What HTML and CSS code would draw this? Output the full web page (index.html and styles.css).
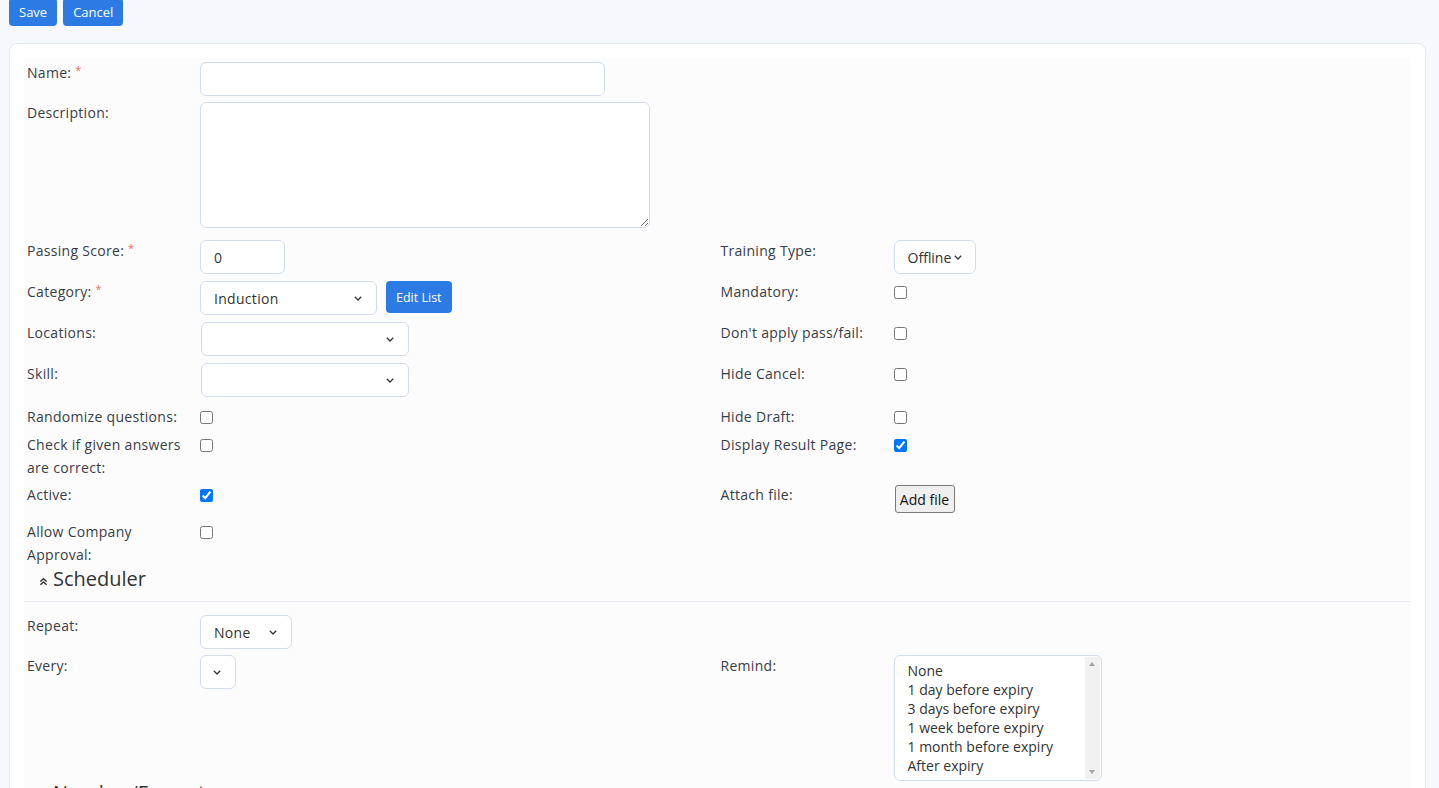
FILE: index.html
```html
<!DOCTYPE html>
<html lang="en">
<head>
    <meta charset="UTF-8">
    <meta name="viewport" content="width=device-width, initial-scale=1.0">
    <title>Edit Training</title>
    <link rel="stylesheet" href="styles.css">
</head>
<body>

    <div class="toolbar">
        <button type="button" class="btn btn-primary">Save</button>
        <button type="button" class="btn btn-primary">Cancel</button>
    </div>

    <div class="card">
        <form class="card-body">
            <!-- General -->
            <div class="row row-name">
                <div class="half">
                    <label class="lbl">Name: <span class="req">*</span></label>
                    <div><input type="text" class="form-control w-name"></div>
                </div>
            </div>

            <div class="row row-desc">
                <div class="half">
                    <label class="lbl">Description:</label>
                    <div><textarea class="form-control w-desc"></textarea></div>
                </div>
            </div>

            <div class="row">
                <div class="half">
                    <label class="lbl">Passing Score: <span class="req">*</span></label>
                    <div><input type="text" class="form-control w-score" value="0"></div>
                </div>
                <div class="half">
                    <label class="lbl">Training Type:</label>
                    <div>
                        <select class="form-select w-type">
                            <option>Offline</option>
                            <option>Online</option>
                        </select>
                    </div>
                </div>
            </div>

            <div class="row">
                <div class="half">
                    <label class="lbl">Category: <span class="req">*</span></label>
                    <div class="inline">
                        <select class="form-select w-category">
                            <option>Induction</option>
                        </select>
                        <button type="button" class="btn btn-primary btn-sm">Edit List</button>
                    </div>
                </div>
                <div class="half">
                    <label class="lbl">Mandatory:</label>
                    <div><input type="checkbox" class="check"></div>
                </div>
            </div>

            <div class="row">
                <div class="half">
                    <label class="lbl">Locations:</label>
                    <div><select class="form-select w-wide"><option></option></select></div>
                </div>
                <div class="half">
                    <label class="lbl">Don't apply pass/fail:</label>
                    <div><input type="checkbox" class="check"></div>
                </div>
            </div>

            <div class="row row-skill">
                <div class="half">
                    <label class="lbl">Skill:</label>
                    <div><select class="form-select w-wide"><option></option></select></div>
                </div>
                <div class="half">
                    <label class="lbl">Hide Cancel:</label>
                    <div><input type="checkbox" class="check"></div>
                </div>
            </div>

            <div class="row row-check row-random">
                <div class="half">
                    <label class="lbl">Randomize questions:</label>
                    <div><input type="checkbox" class="check"></div>
                </div>
                <div class="half">
                    <label class="lbl">Hide Draft:</label>
                    <div><input type="checkbox" class="check"></div>
                </div>
            </div>

            <div class="row row-check">
                <div class="half">
                    <label class="lbl">Check if given answers are correct:</label>
                    <div><input type="checkbox" class="check"></div>
                </div>
                <div class="half">
                    <label class="lbl">Display Result Page:</label>
                    <div><input type="checkbox" class="check" checked></div>
                </div>
            </div>

            <div class="row row-check row-attach">
                <div class="half">
                    <label class="lbl">Active:</label>
                    <div><input type="checkbox" class="check" checked></div>
                </div>
                <div class="half">
                    <label class="lbl">Attach file:</label>
                    <div><button type="button" class="file-btn">Add file</button></div>
                </div>
            </div>

            <div class="row row-check row-approval">
                <div class="half">
                    <label class="lbl">Allow Company Approval:</label>
                    <div><input type="checkbox" class="check"></div>
                </div>
            </div>

            <!-- Scheduler -->
            <h4 class="group-title">
                <svg width="9" height="9" viewBox="0 0 10 10" fill="none" stroke="#333" stroke-width="1.6">
                    <path d="M1.5 5 L5 1.8 L8.5 5"/>
                    <path d="M1.5 8.6 L5 5.4 L8.5 8.6"/>
                </svg>
                Scheduler
            </h4>
            <hr class="divider">

            <div class="row row-repeat">
                <div class="half">
                    <label class="lbl">Repeat:</label>
                    <div>
                        <select class="form-select w-repeat">
                            <option>None</option>
                            <option>Daily</option>
                            <option>Weekly</option>
                            <option>Monthly</option>
                            <option>Yearly</option>
                        </select>
                    </div>
                </div>
            </div>

            <div class="row row-remind">
                <div class="half">
                    <label class="lbl">Every:</label>
                    <div><select class="form-select w-every"><option></option></select></div>
                </div>
                <div class="half">
                    <label class="lbl">Remind:</label>
                    <div>
                        <div class="listbox" role="listbox" aria-multiselectable="true">
                            <div class="listbox-items">
                                <div role="option">None</div>
                                <div role="option">1 day before expiry</div>
                                <div role="option">3 days before expiry</div>
                                <div role="option">1 week before expiry</div>
                                <div role="option">1 month before expiry</div>
                                <div role="option">After expiry</div>
                            </div>
                            <div class="scroll-track">
                                <span class="arrow-up"></span>
                                <span class="arrow-down"></span>
                            </div>
                        </div>
                    </div>
                </div>
            </div>

            <!-- Numbering -->
            <h4 class="group-title">
                <svg width="9" height="9" viewBox="0 0 10 10" fill="none" stroke="#333" stroke-width="1.6">
                    <path d="M1.5 5 L5 1.8 L8.5 5"/>
                    <path d="M1.5 8.6 L5 5.4 L8.5 8.6"/>
                </svg>
                Number/Format
            </h4>
        </form>
    </div>

</body>
</html>
```

FILE: styles.css
```css
:root {
    --primary-color: #2c7be5;
    --page-bg: #f6f8fc;
    --card-border: #e3e8f1;
    --panel-bg: #fcfcfd;
    --input-border: #d2dcea;
    --text-color: #383d47;
    --danger-color: #ef6b6b;
}

body {
    margin: 0;
    padding: 0 13px 0 9px;
    background-color: var(--page-bg);
    font-family: "Open Sans", Arial, sans-serif;
    font-size: 14px;
    letter-spacing: 0.3px;
    color: var(--text-color);
    overflow: hidden;
}

/* Top action buttons */
.toolbar {
    display: flex;
    gap: 6px;
    margin-top: -2px;
}

.btn {
    font-family: inherit;
    letter-spacing: 0;
    border: none;
    border-radius: 4px;
    cursor: pointer;
}

.btn-primary {
    background-color: var(--primary-color);
    color: #fff;
    font-size: 13px;
    height: 28px;
    padding: 0 10px;
}

.btn-sm {
    height: 32px;
    font-size: 12.5px;
    padding: 0 10px;
    margin-left: 9px;
}

.card {
    margin-top: 17px;
    background-color: #fff;
    border: 1px solid var(--card-border);
    border-radius: 8px;
    padding: 14px 15px 0 14px;
}

.card-body {
    display: block;
    background-color: var(--panel-bg);
    padding-top: 4px;
}

/* Two-column form rows */
.row {
    display: flex;
    margin-bottom: 7px;
}

.row-name { margin-bottom: 6px; }
.row-desc { margin-bottom: 12px; }
.row-skill { margin-bottom: 9px; }
.row-check { margin-bottom: 5px; }
.row-random { margin-bottom: 6px; }
.row-approval { margin-bottom: 1px; }
.row-repeat { margin-bottom: 6px; }
.row-remind { margin-bottom: 0; }

.row-attach {
    min-height: 32px;
}

.half {
    flex: 1;
    display: grid;
    grid-template-columns: 173px 1fr;
    padding-left: 3px;
}

.half + .half {
    padding-left: 4px;
}

.lbl {
    line-height: 22.4px;
    padding-right: 8px;
}

.req {
    color: var(--danger-color);
    font-size: 11px;
    vertical-align: top;
    line-height: 16px;
}

.inline {
    display: flex;
    align-items: flex-start;
}

.form-control, .form-select, .listbox {
    box-sizing: border-box;
    font-family: inherit;
    font-size: 14px;
    letter-spacing: 0.3px;
    color: #333;
    background-color: #fff;
    border: 1px solid var(--input-border);
    border-radius: 6px;
    outline: none;
    margin: 0;
}

.form-control {
    height: 34px;
    padding: 0 13px;
    display: block;
}

textarea.form-control {
    padding: 6px 13px;
    resize: vertical;
}

.form-select {
    appearance: none;
    -webkit-appearance: none;
    height: 34px;
    padding: 0 28px 0 13px;
    background-image: url("data:image/svg+xml,%3Csvg xmlns='http://www.w3.org/2000/svg' width='8' height='5' viewBox='0 0 8 5'%3E%3Cpath d='M0.8 0.8 L4 4 L7.2 0.8' fill='none' stroke='%23333' stroke-width='1.3'/%3E%3C/svg%3E");
    background-repeat: no-repeat;
    background-position: right 14px center;
    display: block;
}

.w-name { width: 405px; }
.w-desc { width: 450px; height: 126px; }
.w-score { width: 85px; }
.w-category { width: 177px; }
.w-wide { width: 208px; margin-left: 1px; }
.w-repeat { width: 92px; }
.w-every { width: 36px; padding: 0; }
.w-type {
    width: 82px;
    padding-right: 12px;
    letter-spacing: 0;
    background-position: right 13px center;
}

.check {
    width: 13px;
    height: 13px;
    margin: 5px 0 0 0;
    display: block;
}

.file-btn {
    font-family: inherit;
    font-size: 14px;
    color: #111;
    background-color: #efefef;
    border: 1px solid #7a7a7a;
    border-radius: 3px;
    height: 28px;
    width: 60px;
    padding: 0;
    margin: 1px 0 0 1px;
}

/* Collapsible group header */
.group-title {
    display: flex;
    align-items: center;
    gap: 5px;
    margin: 0;
    padding-left: 15px;
    font-size: 20px;
    font-weight: normal;
    letter-spacing: 0;
    line-height: 24px;
    color: #333;
}

.group-title svg {
    margin-top: 4px;
}

.divider {
    border: none;
    border-top: 1px solid #e4e8ef;
    margin: 10px 0 13px 0;
}

/* Reminder list with a scrollbar track on the right */
.listbox {
    width: 208px;
    height: 126px;
    display: flex;
    overflow: hidden;
    letter-spacing: 0;
}

.listbox-items {
    flex: 1;
    padding-top: 5px;
}

.listbox-items div {
    padding: 0 13px;
    line-height: 19px;
    color: #333;
}

.scroll-track {
    width: 15px;
    margin: 1px 1px 1px 0;
    background-color: #f1f1f1;
    display: flex;
    flex-direction: column;
    justify-content: space-between;
    align-items: center;
    padding: 5px 0;
}

.arrow-up, .arrow-down {
    width: 0;
    height: 0;
    border-left: 3.5px solid transparent;
    border-right: 3.5px solid transparent;
}

.arrow-up {
    border-bottom: 4px solid #a3a3a3;
}

.arrow-down {
    border-top: 4px solid #a3a3a3;
}
```
